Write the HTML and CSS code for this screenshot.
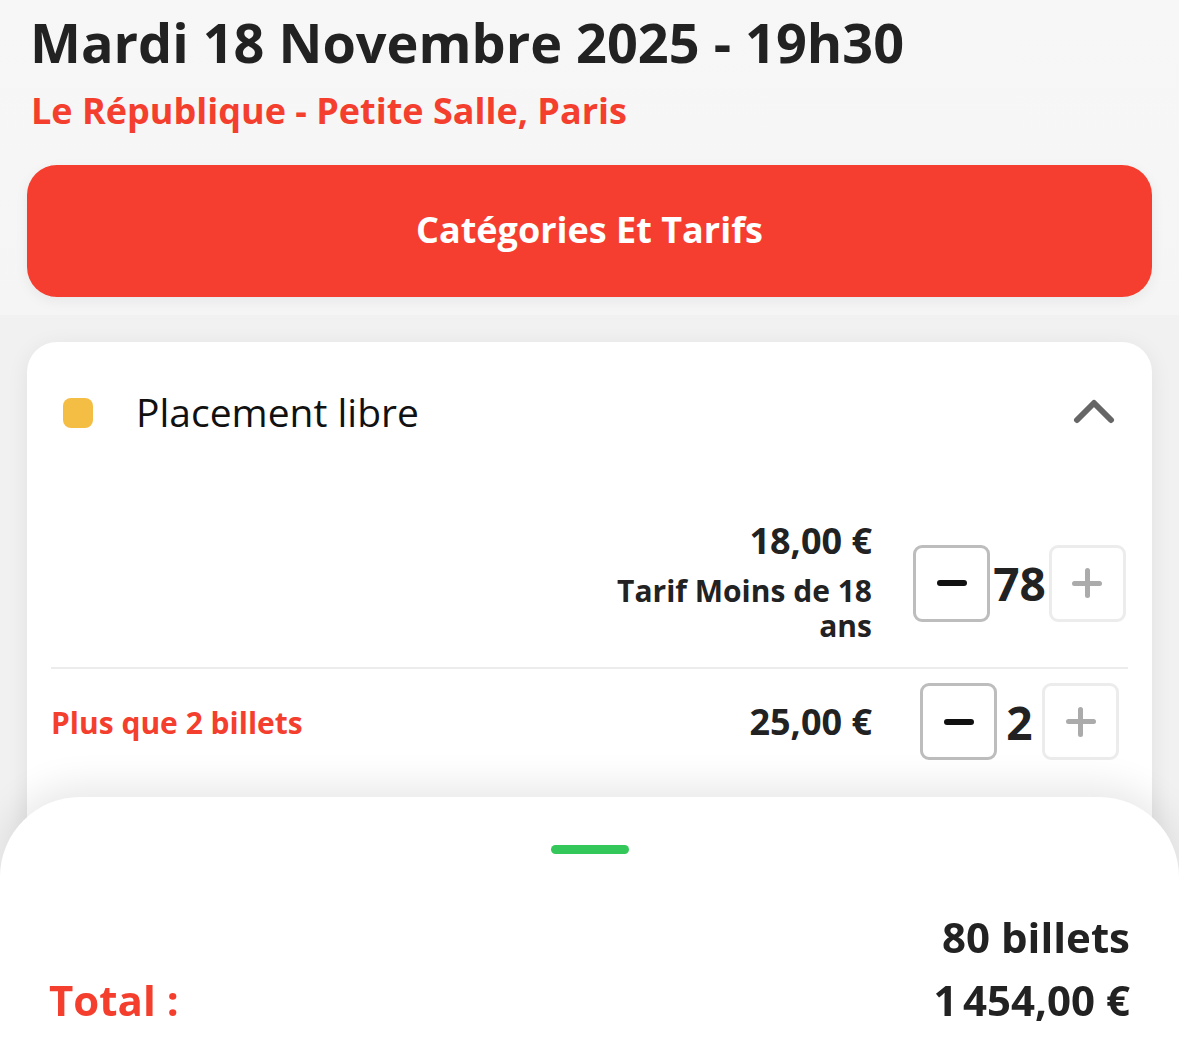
FILE: index.html
```html
<!DOCTYPE html>
<html lang="fr">
<head>
<meta charset="utf-8">
<title>Catégories et tarifs</title>
<link rel="stylesheet" href="styles.css">
</head>
<body>
<header class="header">
  <h1 class="title">Mardi 18 Novembre 2025 - 19h30</h1>
  <p class="venue">Le République - Petite Salle, Paris</p>
  <button class="cta">Catégories Et Tarifs</button>
</header>

<main class="content">
  <section class="card">
    <div class="card-head">
      <span class="swatch"></span>
      <span class="cat-name">Placement libre</span>
      <svg class="chevron" width="44" height="26" viewBox="0 0 44 26"><path d="M4 22 L21 5 L38 22" fill="none" stroke="#666" stroke-width="6" stroke-linecap="round" stroke-linejoin="round"/></svg>
    </div>
    <div class="tarif tarif-first">
      <div class="tarif-left"></div>
      <div class="tarif-price">
        <div class="price">18,00 €</div>
        <div class="label">Tarif Moins de 18<br>ans</div>
      </div>
      <div class="stepper-col">
        <div class="stepper">
          <span class="btn btn-minus"><span class="bar"></span></span>
          <span class="qty">78</span>
          <span class="btn btn-plus"><span class="bar"></span><span class="bar bar-v"></span></span>
        </div>
      </div>
    </div>
    <div class="tarif tarif-second">
      <div class="tarif-left warn">Plus que 2 billets</div>
      <div class="tarif-price">
        <div class="price">25,00 €</div>
      </div>
      <div class="stepper-col">
        <div class="stepper">
          <span class="btn btn-minus"><span class="bar"></span></span>
          <span class="qty">2</span>
          <span class="btn btn-plus"><span class="bar"></span><span class="bar bar-v"></span></span>
        </div>
      </div>
    </div>
  </section>
</main>

<footer class="sheet">
  <div class="handle"></div>
  <div class="count">80 billets</div>
  <div class="total-row">
    <span class="total-label">Total :</span>
    <span class="total-value">1&#8239;454,00 €</span>
  </div>
</footer>
</body>
</html>
```

FILE: styles.css
```css
* { box-sizing: border-box; }
html, body { margin: 0; padding: 0; }
body {
  background: #f1f1f1;
  font-family: "Open Sans", "Noto Sans", sans-serif;
  color: #222;
  height: 1052px;
  overflow: hidden;
}
.header {
  background: linear-gradient(180deg, #f7f7f7 0%, #f5f5f5 100%);
  padding: 10px 27px 18px 27px;
}
.title {
  margin: 0 0 0 3px;
  font-size: 54px;
  line-height: 64px;
  font-weight: 700;
  color: #222;
}
.venue {
  margin: 17px 0 0 4px;
  font-size: 36px;
  line-height: 40px;
  font-weight: 700;
  color: #f43f2e;
}
.cta {
  display: flex;
  align-items: center;
  justify-content: center;
  width: 100%;
  height: 132px;
  margin-top: 34px;
  padding: 0 0 3px 0;
  border: none;
  border-radius: 30px;
  background: #f53e2f;
  color: #fff;
  font-family: inherit;
  font-size: 36px;
  font-weight: 700;
  box-shadow: 0 4px 14px rgba(0,0,0,0.06);
}
.content {
  padding: 27px 27px 0 27px;
}
.card {
  background: #fff;
  border-radius: 30px;
  padding: 0 24px;
  height: 520px;
  box-shadow: 0 4px 22px rgba(0,0,0,0.07);
}
.card-head {
  display: flex;
  align-items: center;
  height: 142px;
  padding: 0 12px;
}
.swatch {
  width: 30px;
  height: 30px;
  border-radius: 8px;
  background: #f4be45;
  flex: none;
}
.cat-name {
  margin-left: 43px;
  margin-top: -3px;
  font-size: 39px;
  font-weight: 400;
  color: #111;
  flex: 1;
}
.chevron { flex: none; margin-right: -1px; margin-top: -4px; }
.tarif {
  display: flex;
  align-items: center;
}
.tarif-first {
  padding: 15px 0 0 0;
  height: 185px;
  border-bottom: 2px solid #ececec;
}
.tarif-second {
  padding: 14px 0;
}
.tarif-left { flex: 1; }
.warn {
  color: #f43f2e;
  font-size: 30px;
  font-weight: 700;
  padding-top: 2px;
}
.tarif-price {
  text-align: right;
  margin-right: 39px;
}
.price {
  font-size: 36px;
  line-height: 36px;
  font-weight: 700;
  color: #222;
}
.label {
  margin-top: 14px;
  font-size: 30px;
  line-height: 35px;
  font-weight: 700;
  color: #222;
}
.stepper-col {
  width: 217px;
  display: flex;
  justify-content: center;
}
.stepper {
  display: flex;
  align-items: center;
}
.btn {
  position: relative;
  width: 77px;
  height: 77px;
  border-radius: 9px;
  display: flex;
  align-items: center;
  justify-content: center;
  background: #fff;
}
.btn-minus { border: 3px solid #bdbdbd; }
.btn-plus { border: 3px solid #ececec; }
.bar {
  display: block;
  width: 30px;
  height: 6px;
  border-radius: 3px;
  background: #111;
}
.btn-plus .bar {
  position: absolute;
  background: #ababab;
  width: 30px;
  height: 5px;
}
.btn-plus .bar-v {
  width: 5px;
  height: 30px;
}
.qty {
  min-width: 39px;
  padding: 0 3px;
  box-sizing: content-box;
  text-align: center;
  font-size: 46px;
  font-weight: 700;
  color: #222;
  line-height: 1;
}
.sheet {
  position: fixed;
  left: 0;
  right: 0;
  bottom: 0;
  height: 255px;
  background: #fff;
  border-radius: 80px 80px 0 0;
  box-shadow: 0 -12px 36px rgba(0,0,0,0.09);
  padding: 48px 49px 0 49px;
}
.handle {
  width: 78px;
  height: 9px;
  border-radius: 5px;
  background: #34c759;
  margin: 0 auto;
}
.count {
  margin-top: 55px;
  text-align: right;
  font-size: 42px;
  line-height: 56px;
  font-weight: 700;
  color: #222;
}
.total-row {
  margin-top: 7px;
  display: flex;
  justify-content: space-between;
  align-items: baseline;
  line-height: 56px;
}
.total-label {
  font-size: 42px;
  font-weight: 700;
  color: #f43f2e;
}
.total-value {
  font-size: 42px;
  font-weight: 700;
  color: #222;
}
```
